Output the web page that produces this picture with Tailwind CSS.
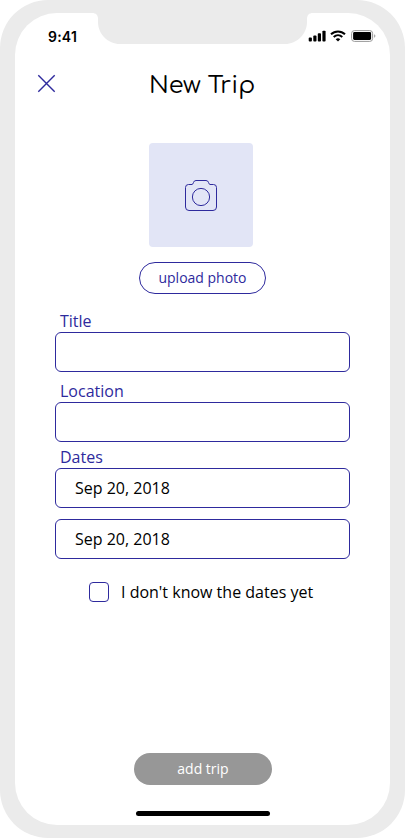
<!DOCTYPE html>
<html lang="en">
<head>
<meta charset="utf-8">
<meta name="viewport" content="width=device-width, initial-scale=1">
<title>New Trip</title>
<script src="https://cdn.jsdelivr.net/npm/@tailwindcss/browser@4"></script>
</head>
<body class="bg-white overflow-hidden font-['Open_Sans','Noto_Sans',sans-serif] text-black">
<div class="w-[405px] h-[838px] bg-[#ebebeb] rounded-[48px] px-[15px] py-[13px]">
  <main class="w-full h-[812px] bg-white rounded-[42px] flex flex-col items-center">
    <!-- status bar with notch -->
    <div class="w-full h-[31px] flex shrink-0">
      <div class="w-[77px] pl-[33px] pt-[14px] font-['Inter',sans-serif] font-semibold text-[14px] leading-5 tracking-[0.2px]">9:41</div>
      <svg class="w-[221px] h-[32px] -mt-px shrink-0" viewBox="0 0 221 32" fill="#ebebeb"><path d="M0 0H221V1C217 1 215 3 215 7V10C215 22 205 32 193 32H28C16 32 6 22 6 10V7C6 3 4 1 0 1Z"/></svg>
      <div class="flex items-start">
        <svg class="w-[18px] h-[12px] mt-[17px] -ml-[5px]" viewBox="0 0 18 12"><rect x="0.7" y="7.5" width="3.2" height="4" rx="0.9"/><rect x="5.3" y="5.5" width="3.2" height="6" rx="0.9"/><rect x="9.8" y="3.2" width="3.2" height="8.3" rx="0.9"/><rect x="14.4" y="0.7" width="3.2" height="10.8" rx="0.9"/></svg>
        <svg class="w-[16px] h-[12px] mt-[17px] ml-[4px]" viewBox="0 0 16 12" fill="none" stroke="#000" stroke-width="2"><path d="M1 4.3C5 .4 11 .4 15 4.3M3.7 7C6.2 4.7 9.8 4.7 12.3 7"/><path d="M5.7 9.2C7 8 9 8 10.3 9.2L8 11.5Z" fill="#000" stroke="none"/></svg>
        <svg class="w-[25px] h-[12px] mt-[17px] ml-[5px]" viewBox="0 0 25 12"><rect x=".6" y=".6" width="21" height="10.8" rx="2.8" fill="none" stroke="#999"/><rect x="2.1" y="2.1" width="18" height="7.8" rx="1.3"/><path d="M23.2 4.2C24.8 4.8 24.8 7.2 23.2 7.8Z" fill="#999"/></svg>
      </div>
    </div>
    <header class="w-full h-[80px] -mt-px mb-[2px] pl-[22px] flex items-center shrink-0">
      <svg class="w-[19px] h-[19px]" viewBox="0 0 19 19" fill="none" stroke="#2e2a9d" stroke-width="1.4"><path d="M1.3 1.3L17.7 17.7M17.7 1.3L1.3 17.7"/></svg>
      <h1 class="ml-[93px] pt-[6px] font-['Comfortaa','Quicksand','Lato',sans-serif] font-normal text-[24px] leading-8 whitespace-nowrap">New Trip</h1>
    </header>
    <div class="w-[104px] h-[104px] mt-[18px] mr-[3px] rounded bg-[#e2e5f6] flex items-center justify-center shrink-0">
      <svg class="w-[34px] h-[34px]" viewBox="0 0 34 34" fill="none" stroke="#2e2a9d" stroke-width="1"><path d="M4.5 6.5H8Q9 6.3 9.5 4.5Q10 2.5 12 2.5H22Q24 2.5 24.5 4.5Q25 6.3 26 6.5H29.5Q32.5 6.5 32.5 9.5V29Q32.5 32.5 29 32.5H5Q1.5 32.5 1.5 29V9.5Q1.5 6.5 4.5 6.5Z"/><circle cx="17" cy="19" r="8.6"/></svg>
    </div>
    <button class="w-[127px] h-[32px] mt-[15px] border border-[#2e2a9d] rounded-full text-[#2e2a9d] text-[14px] leading-none pb-px shrink-0">upload photo</button>
    <form class="w-[295px] mt-[17px] text-[16px]">
      <label class="block h-[21px] pl-[5px] leading-[20px] text-[#2e2a9d]">Title</label>
      <div class="h-[40px] border border-[#2e2a9d] rounded-[6px]"></div>
      <label class="block h-[20px] mt-[10px] pl-[5px] leading-[18px] text-[#2e2a9d]">Location</label>
      <div class="h-[40px] border border-[#2e2a9d] rounded-[6px]"></div>
      <label class="block h-[20px] mt-[6px] pl-[5px] leading-[18px] text-[#2e2a9d]">Dates</label>
      <div class="h-[40px] border border-[#2e2a9d] rounded-[6px] pl-[19px] leading-[38px]">Sep 20, 2018</div>
      <div class="h-[40px] mt-[11px] border border-[#2e2a9d] rounded-[6px] pl-[19px] leading-[38px]">Sep 20, 2018</div>
      <div class="h-[20px] mt-[23px] pl-[34px] flex items-center">
        <span class="w-[20px] h-[20px] border border-[#2e2a9d] rounded-[4px]"></span>
        <span class="ml-[12px] leading-5 whitespace-nowrap">I don't know the dates yet</span>
      </div>
    </form>
    <button class="w-[138px] h-[32px] mt-[151px] rounded-full bg-[#979797] text-white text-[14px] leading-none pb-px pl-px shrink-0">add trip</button>
    <div class="w-[134px] h-[5px] mt-[26px] rounded-full bg-black shrink-0"></div>
  </main>
</div>
</body>
</html>
